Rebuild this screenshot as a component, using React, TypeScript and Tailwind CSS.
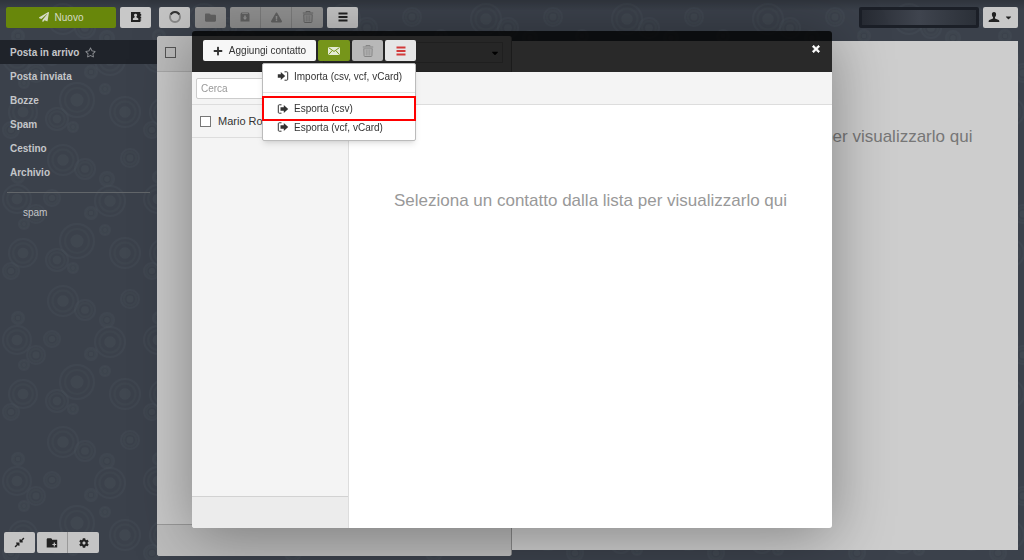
import React, { useState } from 'react';
import {
  FaPaperPlane,
  FaFolder,
  FaExclamationTriangle,
  FaRegStar,
  FaPlus,
  FaTimes,
  FaCompressAlt,
  FaCaretDown,
  FaCog,
} from 'react-icons/fa';

const FOLDERS = ['Posta in arrivo', 'Posta inviata', 'Bozze', 'Spam', 'Cestino', 'Archivio'];

// x, y, radius of the ring motifs in one wallpaper tile
const RINGS = [
  [63, 19, 15], [85, 28, 10], [17, 58, 14], [36, 73, 9], [52, 57, 8], [110, 60, 15],
  [77, 100, 17], [23, 112, 14], [57, 119, 11], [125, 112, 15], [130, 17, 9],
  [107, 38, 7], [18, 36, 6], [24, 83, 5], [91, 72, 6], [105, 89, 5], [11, 130, 8], [73, 127, 5],
];

function Wallpaper() {
  return (
    <svg className="absolute inset-0 h-full w-full" aria-hidden="true">
      <defs>
        <pattern id="rings" width="141" height="141" patternUnits="userSpaceOnUse">
          {RINGS.map(([x, y, r]) => (
            <g key={`${x}-${y}`} fill="none" stroke="#4c565e" strokeOpacity="0.22" strokeWidth="2">
              <circle cx={x} cy={y} r={r} />
              <circle cx={x} cy={y} r={r * 0.7} strokeOpacity="0.16" />
              <circle cx={x} cy={y} r={r * 0.38} fill="#4c565e" fillOpacity="0.3" stroke="none" />
            </g>
          ))}
        </pattern>
      </defs>
      <rect width="100%" height="100%" fill="url(#rings)" />
    </svg>
  );
}

function ContactsIcon() {
  return (
    <svg viewBox="0 0 12 12" className="h-3 w-3" fill="currentColor">
      <path fillRule="evenodd" d="M1 1h9.4v2h.8v1.8h-.8v1h.8v1.8h-.8v1h.8v1h-.8V11H1ZM5.5 2.8a1.4 1.5 0 0 0-.8 2.8v.7L2.9 7.5V9h5.4V7.5L6.4 6.3v-.7a1.4 1.5 0 0 0-.9-2.8Z" />
    </svg>
  );
}

function TrashIcon() {
  return (
    <svg viewBox="0 0 12 14" className="h-3.5 w-3" fill="none" stroke="currentColor">
      <path d="M4 2.500v-1h4v1M.8 3h10.400M1.800 4.500l.3 7.200q0 .8.800.8h6.200q.8 0 .8-.8l.3-7.200" />
      <path strokeWidth="0.7" d="M1.800 4.700h8.400M4.200 5.500v6M6 5.500v6M7.800 5.500v6" />
    </svg>
  );
}

function ArchiveIcon() {
  return (
    <svg viewBox="0 0 12 12" className="h-3 w-3" fill="currentColor">
      <path fillRule="evenodd" d="M2.5 1.500h7L10.500 3v7.500h-9V3ZM2.900 3h6.200l-.4-.7H3.300ZM5.200 4.500v2H3.800L6 9l2.200-2.500H6.800v-2Z" />
    </svg>
  );
}

function ListIcon() {
  return (
    <svg viewBox="0 0 12 12" className="h-3 w-3" fill="currentColor">
      <path d="M1.500 1.500h9v2h-9ZM1.500 5h9v2h-9ZM1.500 8.500h9v2h-9Z" />
    </svg>
  );
}

function SpinnerIcon() {
  return (
    <svg viewBox="0 0 14 14" className="h-3.5 w-3.5" fill="none" strokeWidth="2">
      <circle cx="7" cy="7" r="5" stroke="#888" />
      <path d="M2.7 4.5A5 5 0 0 1 11.3 4.5" stroke="#333" />
    </svg>
  );
}

function MailIcon() {
  return (
    <svg viewBox="0 0 12 10" className="h-2.5 w-3">
      <path fill="#e4ebd4" d="M0 1h12v8H0Z" />
      <path d="m.5 1.5 5.5 4 5.5-4M.5 8.7l3.6-4M11.5 8.7l-3.6-4" stroke="#76951a" fill="none" />
    </svg>
  );
}

function UserIcon() {
  return (
    <svg viewBox="0 0 12 12" className="h-3 w-3" fill="currentColor">
      <path d="M6 1C4.500 1 3.800 2 3.900 3.400 4 4.800 4.500 5.600 5 6v1.600L1.300 9C.8 9.300.6 10 .6 11h10.800c0-1-.2-1.700-.7-2L7 7.600V6c.5-.4 1-1.200 1.100-2.600C8.200 2 7.500 1 6 1Z" />
    </svg>
  );
}

function NewFolderIcon() {
  return (
    <svg viewBox="0 0 12 12" className="h-3 w-3" fill="currentColor">
      <path fillRule="evenodd" d="M.7 3V2l.7-.7h3.600L6 2v.7h5.200v7.800H.7ZM7.700 5.500v1.400H6.400v1.200h1.300v1.400h1.200V8.100h1.300V6.900H8.900V5.500Z" />
    </svg>
  );
}

function ImportIcon() {
  return (
    <svg viewBox="0 0 12 12" className="h-3 w-3">
      <path fill="currentColor" d="M.8 4.300h3V2l4.400 4-4.400 4V7.700h-3Z" />
      <path fill="none" stroke="currentColor" d="M7.500 1.800h2.300q.9 0 .9.900v6.600q0 .9-.9.900H7.500" />
    </svg>
  );
}

function ExportIcon() {
  return (
    <svg viewBox="0 0 12 12" className="h-3 w-3">
      <path fill="currentColor" d="M3.500 4.300h3.300V2l4.400 4-4.400 4V7.700H3.500Z" />
      <path fill="none" stroke="currentColor" d="M4.500 1.800H2.200q-.9 0-.9.900v6.600q0 .9.900.9h2.300" />
    </svg>
  );
}

type ToolButtonProps = {
  label: string;
  className: string;
  children: React.ReactNode;
};

function ToolButton({ label, className, children }: ToolButtonProps) {
  return (
    <button type="button" aria-label={label} className={`flex h-[21px] items-center justify-center ${className}`}>
      {children}
    </button>
  );
}

function ContactsDialog() {
  const [query, setQuery] = useState('');

  return (
    <div
      role="dialog"
      aria-label="Contatti"
      className="flex h-full w-full max-w-[640px] flex-col rounded-[3px] shadow-[0_8px_60px_rgba(0,0,0,0.36)]"
    >
      {/* Toolbar */}
      <div className="flex h-[41px] shrink-0 items-center justify-between rounded-t-[3px] bg-black/80 px-[11px] pb-0.5">
        <div className="flex gap-[2px]">
          <button type="button" className="flex h-[21px] w-[113px] items-center justify-center gap-1.5 rounded-[2px] bg-[#f7f7f7] text-[10px] text-[#333]">
            <FaPlus className="h-[10px] w-[10px]" />
            Aggiungi contatto
          </button>
          <ToolButton label="Scrivi" className="w-8 rounded-[2px] bg-[#76951a]"><MailIcon /></ToolButton>
          <ToolButton label="Elimina contatto" className="w-[31px] rounded-[2px] bg-[#b8b8b8] text-[#858585]"><TrashIcon /></ToolButton>
          <div className="relative">
            <ToolButton label="Altro" className="w-[31px] rounded-[2px] bg-[#e6e6e6] text-[#d23a3a]"><ListIcon /></ToolButton>

            {/* Import / export menu */}
            <ul className="absolute top-[23px] right-0 z-10 w-[154px] rounded-[2px] border border-[#bbb] bg-white pb-[7px] text-[10px] text-[#333] shadow-md">
              <li className="border-b border-[#e5e5e5] pb-1">
                <button type="button" className="flex h-6 w-full items-center gap-[5px] pl-3.5">
                  <ImportIcon />
                  Importa (csv, vcf, vCard)
                </button>
              </li>
              <li className="-mx-px mt-[3px]">
                <button type="button" className="flex h-[25px] w-full items-center gap-[5px] border-2 border-[#f00] pl-[13px]">
                  <ExportIcon />
                  Esporta (csv)
                </button>
              </li>
              <li>
                <button type="button" className="flex h-3 w-full items-center gap-[5px] pl-3.5">
                  <ExportIcon />
                  Esporta (vcf, vCard)
                </button>
              </li>
            </ul>
          </div>
        </div>
        <button type="button" aria-label="Chiudi" className="text-white">
          <FaTimes className="mb-1 h-[10px] w-[10px] stroke-current stroke-[40px]" />
        </button>
      </div>

      {/* Search bar */}
      <div className="flex h-[33px] shrink-0 items-center border-b border-[#ddd] bg-[#f4f4f4] px-1">
        <input
          type="text"
          aria-label="Cerca"
          placeholder="Cerca"
          value={query}
          onChange={(e) => setQuery(e.target.value)}
          className="h-[21px] w-[148px] rounded-[2px] border border-[#ccc] bg-white px-1 text-[10px] outline-none placeholder:text-[#999]"
        />
      </div>

      <div className="flex min-h-0 flex-1">
        <div className="flex w-[157px] shrink-0 flex-col rounded-bl-[3px] border-r border-[#ddd] bg-[#f4f4f4]">
          <label className="flex h-[33px] items-center gap-[7px] border-b border-[#ddd] pl-2 text-[11px] text-[#333]">
            <input type="checkbox" className="h-[11px] w-[11px] appearance-none border border-[#777] bg-white" />
            Mario Rossi
          </label>
          <div className="mt-auto h-8 rounded-bl-[3px] border-t border-[#d2d2d2] bg-[#ececec]" />
        </div>
        <div className="flex-1 rounded-br-[3px] bg-white pt-[86px] text-center text-[17px] leading-5 text-[#999]">
          Seleziona un contatto dalla lista per visualizzarlo qui
        </div>
      </div>
    </div>
  );
}

export default function App() {
  return (
    <main className="relative flex h-screen flex-col overflow-hidden bg-[#3b414b] font-['Liberation_Sans',Arial,sans-serif]">
      <Wallpaper />

      {/* Main toolbar */}
      <header className="relative flex h-9 shrink-0 items-center justify-between bg-linear-to-b from-black/20 to-transparent to-30% pr-1.5 pb-0.5 pl-1.5 text-[#222]">
        <div className="flex">
          <button type="button" className="flex h-[21px] w-[110px] items-center justify-center gap-1.5 rounded-[2px] bg-[#68870b] text-[10px] text-[#d5dbc5]">
            <FaPaperPlane className="h-[10px] w-[10px]" />
            Nuovo
          </button>
          <ToolButton label="Contatti" className="ml-1 w-[31px] rounded-[2px] bg-[#c8c8c8]"><ContactsIcon /></ToolButton>
          <ToolButton label="Aggiorna" className="ml-2 w-[31px] rounded-[2px] bg-[#c4c4c4]"><SpinnerIcon /></ToolButton>
          <ToolButton label="Sposta" className="ml-[5px] w-[31px] rounded-[2px] bg-[#919191] text-[#626262]"><FaFolder className="h-[11px] w-[11px]" /></ToolButton>
          <div className="ml-1 flex divide-x divide-[#7c7c7c] overflow-hidden rounded-[2px] bg-[#919191] text-[#626262]">
            <ToolButton label="Archivia" className="w-[31px]"><ArchiveIcon /></ToolButton>
            <ToolButton label="Segnala spam" className="w-[31px]"><FaExclamationTriangle className="h-[11px] w-[11px]" /></ToolButton>
            <ToolButton label="Elimina" className="w-[31px]"><TrashIcon /></ToolButton>
          </div>
          <ToolButton label="Altre azioni" className="ml-1 w-[31px] rounded-[2px] bg-[#c4c4c4]"><ListIcon /></ToolButton>
        </div>
        <div className="flex items-center gap-1">
          <input type="search" aria-label="Cerca nella posta" className="h-[21px] w-[120px] rounded-[2px] border-3 border-[#1b1f27] bg-linear-to-r from-[#272b33] via-[#3f444e] to-[#2b3038]" />
          <ToolButton label="Profilo" className="w-[35px] gap-1 rounded-[2px] bg-[#c8c8c8]">
            <UserIcon />
            <FaCaretDown className="h-[9px] w-[9px]" />
          </ToolButton>
        </div>
      </header>

      <div className="relative flex min-h-0 flex-1">
        {/* Folder list */}
        <aside className="flex w-[157px] shrink-0 flex-col pt-1 pb-[7px] text-[#c4c6c9]">
          <nav className="text-[10px] font-bold">
            {FOLDERS.map((folder, i) => (
              <a
                key={folder}
                href="#"
                className={i === 0 ? 'flex h-6 items-center gap-1.5 bg-[#1f232a] pl-2.5' : 'flex h-6 items-center pl-2.5'}
              >
                {folder}
                {i === 0 && <FaRegStar className="h-[11px] w-[11px] text-[#8b8e92]" />}
              </a>
            ))}
          </nav>
          <hr className="mx-[7px] mt-2 border-[#62666a]" />
          <a href="#" className="mt-3 pl-[23px] text-[10px] leading-4">spam</a>
          <div className="mt-auto flex gap-[2px] pl-1 text-[#222]">
            <ToolButton label="Comprimi" className="w-[31px] rounded-[2px] bg-[#c4c4c4]"><FaCompressAlt className="h-[11px] w-[11px]" /></ToolButton>
            <div className="flex divide-x divide-[#999] rounded-[2px] bg-[#c4c4c4]">
              <ToolButton label="Nuova cartella" className="w-[31px]"><NewFolderIcon /></ToolButton>
              <ToolButton label="Impostazioni" className="w-[31px]"><FaCog className="h-[10px] w-[10px]" /></ToolButton>
            </div>
          </div>
        </aside>

        {/* Message list */}
        <section className="mb-1 flex w-[355px] shrink-0 flex-col rounded-[3px] border-r border-[#888] bg-[#c8c8c8]">
          <div className="flex h-9 items-center justify-between rounded-t-[3px] border-b border-[#a8a8a8] bg-[#bcbcbc] px-2 pb-0.5">
            <input type="checkbox" aria-label="Seleziona tutti" className="h-[11px] w-[11px] appearance-none border border-[#555]" />
            <div className="flex h-[21px] w-[180px] items-center justify-end border border-[#999] pr-0.5">
              <FaCaretDown className="h-2.5 w-2.5 text-black" />
            </div>
          </div>
          <div className="mt-auto h-8 rounded-b-[3px] border-t border-[#999] bg-[#bcbcbc]" />
        </section>

        {/* Preview */}
        <section className="mt-[5px] mr-1.5 mb-[10px] flex-1 bg-[#cdcdcd] pt-[86px] text-center text-[17px] leading-5 whitespace-nowrap text-[#777]">
          Seleziona un messaggio dalla lista per visualizzarlo qui
        </section>
      </div>

      <div className="fixed inset-0 flex justify-center pt-[31px] pb-8">
        <ContactsDialog />
      </div>
    </main>
  );
}
